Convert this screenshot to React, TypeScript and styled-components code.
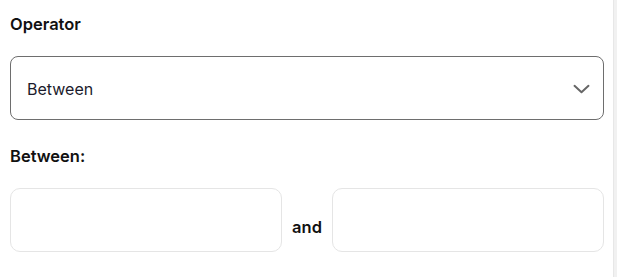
import React, { useState } from "react";
import styled, { createGlobalStyle } from "styled-components";

const GlobalStyle = createGlobalStyle`
  *, *::before, *::after {
    box-sizing: border-box;
  }
  html, body {
    margin: 0;
    padding: 0;
    background: #ffffff;
    font-family: Inter, "Noto Sans", "Liberation Sans", sans-serif;
  }
`;

const Page = styled.div`
  display: flex;
  width: 617px;
  height: 277px;
  overflow: hidden;
`;

const Panel = styled.div`
  flex: 1;
  min-width: 0;
  display: flex;
  flex-direction: column;
  padding: 14px 9px 0 10px;
`;

const ScrollTrack = styled.div`
  width: 4px;
  background: #f1f1f1;
  border-left: 1px solid #e7e7e7;
`;

const Label = styled.div`
  font-size: 16.5px;
  line-height: 20px;
  font-weight: 600;
  color: #111111;
  margin-bottom: 22px;
`;

const SelectBox = styled.div`
  height: 64px;
  border: 1px solid #6e6e6e;
  border-radius: 8px;
  display: flex;
  align-items: center;
  justify-content: space-between;
  padding: 0 13px 0 16px;
  margin-bottom: 26px;
  cursor: pointer;
`;

const SelectValue = styled.span`
  font-size: 16px;
  color: #1b1b2c;
  padding-top: 1px;
`;

const Chevron = styled.svg`
  width: 17px;
  height: 10px;
  margin-top: 1px;
`;

const RangeRow = styled.div`
  display: flex;
  align-items: flex-end;
  gap: 10px;
`;

const NumberInput = styled.input`
  flex: 1;
  min-width: 0;
  width: 0;
  height: 64px;
  border: 1px solid #e5e5e5;
  border-radius: 10px;
  padding: 0 16px;
  font-family: inherit;
  font-size: 16px;
  color: #1b1b2c;
  outline: none;
  background: #fff;
`;

const Joiner = styled.span`
  font-size: 16.5px;
  line-height: 20px;
  font-weight: 600;
  color: #111111;
  padding-bottom: 15px;
`;

export default function App() {
  const [from, setFrom] = useState("");
  const [to, setTo] = useState("");

  return (
    <Page>
      <GlobalStyle />
      <Panel>
        <Label>Operator</Label>
        <SelectBox>
          <SelectValue>Between</SelectValue>
          <Chevron viewBox="0 0 17 10" fill="none">
            <polyline
              points="1.5,1.8 8.5,8.2 15.5,1.8"
              stroke="#666"
              strokeWidth="2"
              strokeLinecap="round"
              strokeLinejoin="round"
            />
          </Chevron>
        </SelectBox>
        <Label>Between:</Label>
        <RangeRow>
          <NumberInput value={from} onChange={(e) => setFrom(e.target.value)} />
          <Joiner>and</Joiner>
          <NumberInput value={to} onChange={(e) => setTo(e.target.value)} />
        </RangeRow>
      </Panel>
      <ScrollTrack />
    </Page>
  );
}
